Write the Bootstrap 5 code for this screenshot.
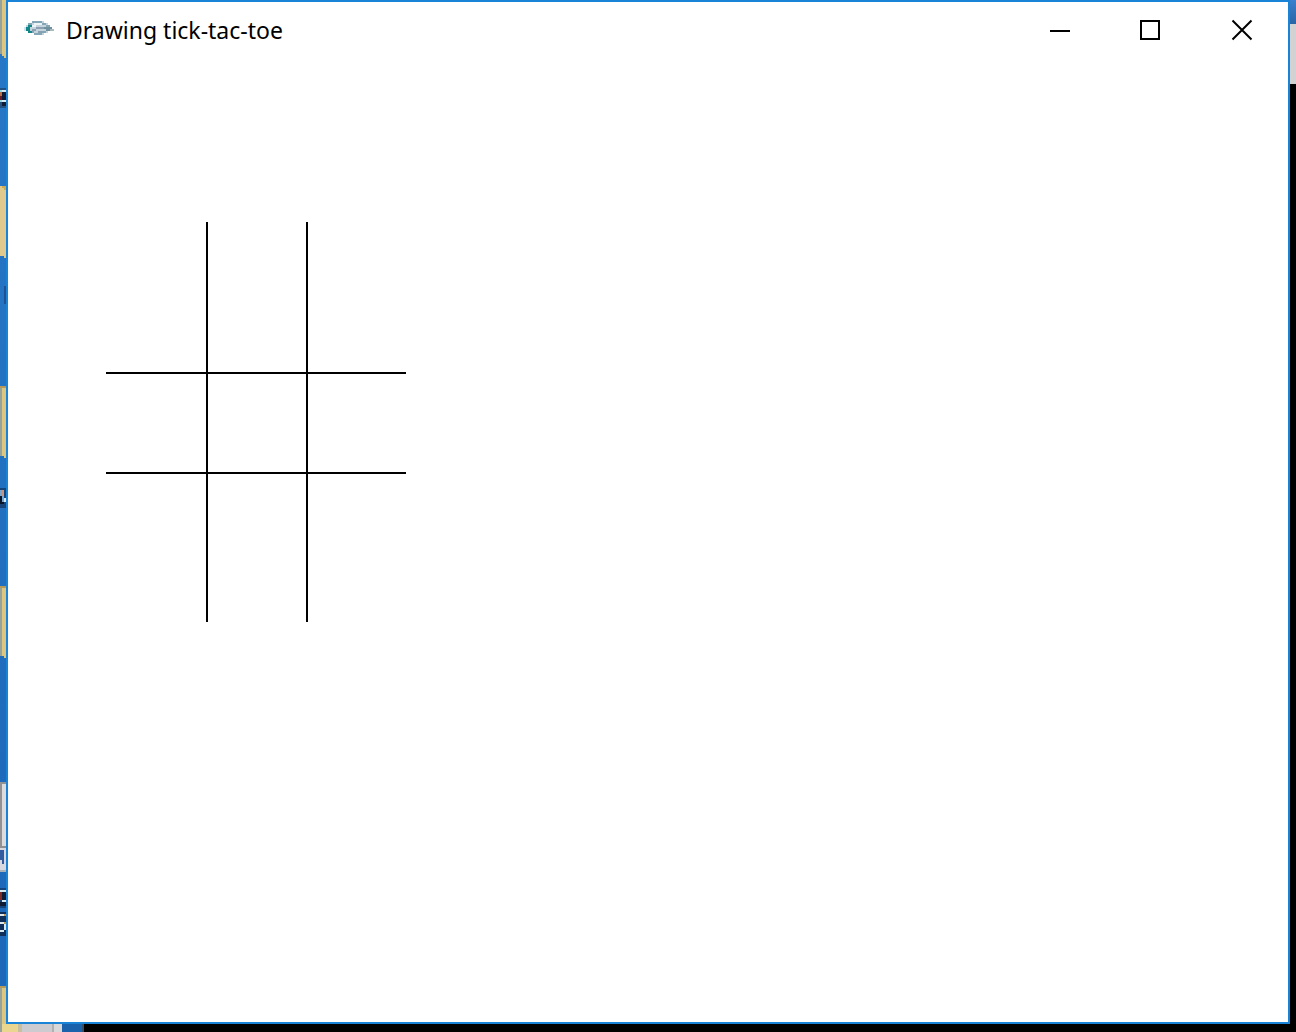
<!DOCTYPE html>
<html lang="en">
<head>
<meta charset="utf-8">
<meta name="viewport" content="width=device-width, initial-scale=1">
<title>Drawing tick-tac-toe</title>
<link href="https://cdn.jsdelivr.net/npm/bootstrap@5.3.0/dist/css/bootstrap.min.css" rel="stylesheet">
<style>
body { background: #000; font-family: "Noto Sans", "Open Sans", sans-serif; }
.desk-left { width: 6px; background: #2270c0; }
.desk-right { width: 6px; }
.desk-sky { height: 24px; background: linear-gradient(#3a80cc, #2a64a4); }
.desk-panel { height: 60px; background: #d2d2d2; }
.desk-bottom { height: 8px; }
.app-window { border: 2px solid #1883d7; background: #fff; }
.title-bar { height: 56px; padding-left: 16px; }
.window-title { font-size: 23px; line-height: 32px; color: #000; }
.caption-btn { width: 92px; height: 52px; border: 0; background: transparent; color: #000; }
.caption-btn:hover { background: #e5e5e5; }
.canvas-area { padding: 164px 98px; }
</style>
<script src="https://cdn.jsdelivr.net/npm/bootstrap@5.3.0/dist/js/bootstrap.bundle.min.js"></script>
</head>
<body class="d-flex flex-column vh-100 overflow-hidden">
<div class="d-flex flex-grow-1">
  <!-- edge of the desktop: folders, files and their labels -->
  <div class="desk-left flex-shrink-0">
    <svg class="d-block" width="6" height="1024" shape-rendering="crispEdges" aria-hidden="true">
      <defs>
        <linearGradient id="desk" x2="0" y2="1"><stop stop-color="#2878c8"/><stop offset="1" stop-color="#1c67b7"/></linearGradient>
      </defs>
      <rect width="6" height="1024" fill="url(#desk)"/>
      <path fill="#94a49c" d="M0 0h2v54H0z"/><path fill="#dcc680" d="M2 0h4v58H4v-2H2z"/>
      <path fill="#245280" d="M0 88h6v20H0z"/><path fill="#d8e8f0" d="M2 90h4v2H2zM2 100h4v2H2z"/><path fill="#101c34" d="M2 92h4v8H2zM2 102h4v4H2z"/><path fill="#b87048" d="M0 92h2v4H0z"/><path fill="#681c28" d="M0 96h2v4H0z"/><path fill="#90d8e8" d="M0 90h2v2H0zM0 100h2v2H0z"/>
      <path fill="#dfc98d" d="M0 186h6v72H4v-2H0z"/><path fill="#cfaa50" d="M2 186h4v4H4v-2H2z"/><path fill="#205290" d="M4 286h2v18H4z"/>
      <path fill="#94a49c" d="M0 388h2v68H0z"/><path fill="#dcc680" d="M2 386h4v72H4v-2H2z"/><path fill="#b89a58" d="M0 386h6v2H0z"/>
      <path fill="#174478" d="M0 488h6v20H0z"/><path fill="#081528" d="M0 494h4v10H0z"/><path fill="#75a6d0" d="M0 490h2v6H0zM2 496h2v6H2z"/><path fill="#c79480" d="M2 490h2v6H2z"/><path fill="#d8e8f0" d="M4 498h2v4H4z"/>
      <path fill="#94a49c" d="M0 588h2v68H0z"/><path fill="#dcc680" d="M2 588h4v70H4v-2H2z"/><path fill="#b89a58" d="M0 586h6v2H0z"/>
      <path fill="#929292" d="M0 782h6v2H0zM0 784h2v62H0z"/><path fill="#dcdcdc" d="M2 784h4v62H2z"/><path fill="#909090" d="M0 846h6v2H0z"/><path fill="#d8d8e0" d="M0 848h6v22H0z"/><path fill="#315da0" d="M0 850h4v14H2v-4H0z"/><path fill="#a8b0b8" d="M0 870h6v2H0z"/>
      <path fill="#174478" d="M0 888h6v20H0z"/><path fill="#d8e8f0" d="M0 890h6v2H0zM2 900h4v2H2z"/><path fill="#101c34" d="M2 892h4v8H2zM0 902h6v4H0z"/><path fill="#802c28" d="M0 892h2v8H0z"/>
      <path fill="#102f58" d="M0 912h6v24H0z"/><path fill="#d8e8f0" d="M0 914h4v2H0zM0 922h4v2H0zM4 924h2v6H4zM0 930h4v2H0z"/><path fill="#c79450" d="M4 914h2v2H4zM4 922h2v2H4z"/>
      <path fill="#94a49c" d="M0 986h2v38H0z"/><path fill="#dcc680" d="M2 986h4v38H2z"/><path fill="#b89a58" d="M0 986h6v2H0z"/>
    </svg>
  </div>

  <main class="app-window flex-grow-1 d-flex flex-column">
    <header class="title-bar d-flex align-items-center justify-content-between">
      <div class="d-flex align-items-center">
        <!-- teapot -->
        <svg class="me-2 flex-shrink-0" width="34" height="20" viewBox="0 1 34 20" shape-rendering="crispEdges" aria-hidden="true">
          <path d="M8 2h12v2h4v2h2v2h2v2h2v2h-6v2h-4v2H10v-2H6v-2H2V6h2V4h4z" fill="#c4d3dc"/>
          <path d="M8 2h10v2H8zM4 4h4v2H4zM18 4h4v2h-4zM22 6h4v2h-4zM10 14h8v2h-8zM6 12h4v2H6zM18 12h4v2h-4z" fill="#82a6b5"/>
          <path d="M10 4h8v2h-8zM8 6h4v2H8z" fill="#edf3f6"/>
          <path d="M12 8h8v2h-8zM8 10h4v2H8zM14 12h4v2h-4z" fill="#8b9fb2"/>
          <path d="M20 8h8v2h2v2h-8v-2h-2z" fill="#6f919e"/>
          <path d="M26 10h4v2h-4z" fill="#a9bac2"/>
          <path d="M4 6h4v2H6v4h2v2H4v-2H2V8h2z" fill="#118787"/>
          <path d="M0 8h2v4H0z" fill="#d5e5ee"/>
        </svg>
        <span class="window-title text-nowrap">Drawing tick-tac-toe</span>
      </div>
      <div class="d-flex">
        <button type="button" class="caption-btn d-flex align-items-center justify-content-center p-0" aria-label="Minimize">
          <svg width="24" height="24" viewBox="0 0 24 24" aria-hidden="true"><path d="M4 12h20v2H4z"/></svg>
        </button>
        <button type="button" class="caption-btn d-flex align-items-center justify-content-center p-0" aria-label="Maximize">
          <svg width="24" height="24" viewBox="0 0 24 24" fill="none" aria-hidden="true"><path d="M3 3h18v18H3z" stroke="#000" stroke-width="2"/></svg>
        </button>
        <button type="button" class="caption-btn d-flex align-items-center justify-content-center p-0" aria-label="Close">
          <svg width="24" height="24" viewBox="0 0 24 24" fill="none" aria-hidden="true"><path d="M2.500 2.500l19 19M21.500 2.500l-19 19" stroke="#000" stroke-width="2"/></svg>
        </button>
      </div>
    </header>
    <section class="canvas-area flex-grow-1" aria-label="Drawing area">
      <svg class="d-block" width="300" height="400" viewBox="0 0 300 400" role="img" aria-label="Tic-tac-toe grid">
        <path d="M100 0h2v400h-2zM200 0h2v400h-2zM0 150h300v2H0zM0 250h300v2H0z"/>
      </svg>
    </section>
  </main>

  <div class="desk-right flex-shrink-0">
    <div class="desk-sky"></div>
    <div class="desk-panel"></div>
  </div>
</div>
<div class="desk-bottom flex-shrink-0">
  <svg class="d-block" width="84" height="8" shape-rendering="crispEdges" aria-hidden="true">
    <path fill="#94a49c" d="M0 0h2v8H0z"/><path fill="#ead68e" d="M2 0h16v8H2z"/><path fill="#c8bea0" d="M18 0h4v8h-4z"/><path fill="#cbcbd0" d="M22 0h30v8H22z"/><path fill="#b0b0b0" d="M52 0h2v8h-2z"/><path fill="#d8d8d8" d="M54 0h8v8h-8z"/><path fill="#1b62ad" d="M62 0h20v8H62z"/><path fill="#34506c" d="M82 0h2v8h-2z"/>
  </svg>
</div>
</body>
</html>
